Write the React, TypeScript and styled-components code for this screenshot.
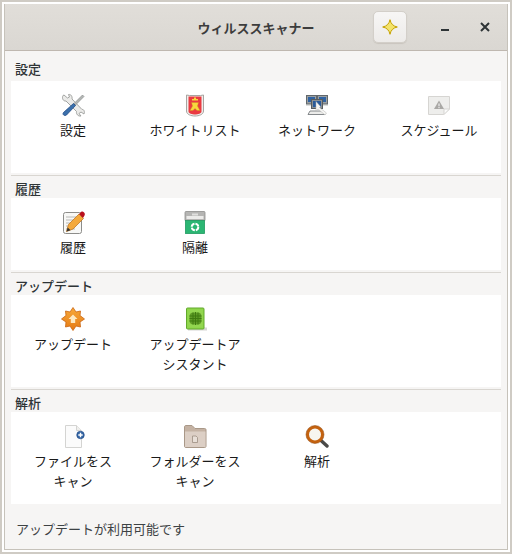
import React from 'react';
import styled, { createGlobalStyle } from 'styled-components';

const GlobalStyle = createGlobalStyle`
  html, body {
    margin: 0;
    padding: 0;
    background: #fff;
  }
  body {
    font-family: "Noto Sans CJK JP", "Noto Sans", sans-serif;
  }
`;

const Frame = styled.div`
  width: 512px;
  height: 554px;
  box-sizing: border-box;
  border: 2px solid #cfcbc4;
  padding: 2px;
  background: #fff;
`;

const Win = styled.div`
  height: 100%;
  box-sizing: border-box;
  display: flex;
  flex-direction: column;
  background: #f6f5f4;
  border: 1px solid #c6c2ba;
  border-top: 0;
`;

const TitleBar = styled.header`
  position: relative;
  flex: none;
  height: 47px;
  box-sizing: border-box;
  display: flex;
  align-items: center;
  justify-content: center;
  background: linear-gradient(#e1ded9, #dad7d2);
  border-bottom: 1px solid #bfb8b0;
`;

const Title = styled.h1`
  margin: 0;
  font-size: 13px;
  font-weight: 700;
  color: #3d3d3d;
`;

const TitleActions = styled.div`
  position: absolute;
  top: 7px;
  right: 2px;
  display: flex;
  align-items: center;
`;

const StarButton = styled.button`
  width: 34px;
  height: 32px;
  margin-right: 18px;
  padding: 0;
  display: flex;
  align-items: center;
  justify-content: center;
  background: linear-gradient(#f7f6f5, #edebe9);
  border: 1px solid #d3cfc9;
  border-radius: 5px;
  box-shadow: 0 1px 1px #c9c5be;
`;

const WinButton = styled.span`
  width: 40px;
  height: 32px;
  display: flex;
  align-items: center;
  justify-content: center;
`;

const Body = styled.main`
  flex: 1;
  padding: 5px 6px 0;
  display: flex;
  flex-direction: column;
`;

const Section = styled.section`
  display: flex;
  flex-direction: column;

  &:first-child > h2 {
    margin-bottom: 3px;
  }
`;

const SectionTitle = styled.h2`
  margin: 0;
  height: 22px;
  box-sizing: border-box;
  padding: 5px 0 0 4px;
  font-size: 13px;
  line-height: 15px;
  font-weight: 500;
  color: #2e3436;
`;

const Panel = styled.div<{ $h: number }>`
  height: ${(p) => p.$h}px;
  box-sizing: border-box;
  padding-top: 12px;
  display: grid;
  grid-template-columns: repeat(4, 122px);
  justify-content: center;
  align-content: start;
  background: #fff;
`;

const Separator = styled.hr`
  margin: 2px 0 0;
  height: 1px;
  border: 0;
  background: #d9d6d1;
`;

const Item = styled.div`
  display: flex;
  flex-direction: column;
  align-items: center;
`;

const IconBox = styled.div`
  width: 24px;
  height: 24px;
  margin-bottom: 3px;
`;

const Label = styled.span`
  width: 94px;
  text-align: center;
  font-size: 13px;
  line-height: 20px;
  line-break: strict;
  color: #1a1a1a;
`;

const StatusBar = styled.footer`
  margin-top: 15px;
  padding-left: 5px;
  font-size: 13px;
  line-height: 20px;
  color: #3d4244;
`;

const Tools = () => (
  <svg width="24" height="24" viewBox="0 0 24 24">
    <path d="M3 2 L6.5 5 L8.5 4 L7.5 1.5 C10 1 11.5 3.5 11 6 L21 16.5 C23 16 24 19 23 21 L20 19 L18 20.5 L20 23 C17 23.5 15 21 15.5 18.5 L5 8 C2.5 8.5 .5 5.5 2 2.5 Z" fill="#ebebe9" stroke="#9a9c9a" strokeWidth=".9" />
    <path d="M21.5 2 L23 3.5 L14 12.5 L12.5 11 Z" fill="#b4b8b5" stroke="#7d7f81" strokeWidth=".6" />
    <path d="M12.5 10.5 L14.5 12.5 L5.5 22 C3.5 23.5 1 21.5 2.5 19.5 Z" fill="#3b70ab" stroke="#204a87" strokeWidth=".8" />
  </svg>
);

const Shield = () => (
  <svg width="24" height="24" viewBox="0 0 24 24">
    <path d="M3.5 2 L6.5 2.5 H17.5 L20.5 2 V18 C20.5 21.5 16 23 12 23 C8 23 3.5 21.5 3.5 18 Z" fill="#efeeec" stroke="#a8a4a0" />
    <path d="M5.5 3.5 H18.5 V18.5 C18.5 20.5 15 21.5 12 21.5 C9 21.5 5.5 20.5 5.5 18.5 Z" fill="#ea3a41" />
    <path d="M11 4.5 H13 V6 H15 V7.5 H9 V6 H11 Z" fill="#f6d83e" />
    <path d="M8.5 9.5 H15.5 L14.5 13 L17 17.5 H14 L12 15.5 L10 17.5 H7 L9.5 13 Z" fill="#f6d83e" stroke="#c98a1a" strokeWidth=".4" />
  </svg>
);

const Network = () => (
  <svg width="24" height="24" viewBox="0 0 24 24">
    <rect x="1.5" y="2.5" width="10" height="8.5" fill="#9aa0a3" stroke="#62676a" />
    <rect x="12.5" y="2.5" width="10" height="8.5" fill="#9aa0a3" stroke="#62676a" />
    <rect x="3" y="4" width="7" height="5" fill="#2f62a2" />
    <rect x="14" y="4" width="7" height="5" fill="#2f62a2" />
    <rect x="1" y="11" width="22" height="1.4" fill="#a9adad" />
    <rect x="6.5" y="6.5" width="11" height="9" fill="#8a9094" stroke="#575c5f" />
    <rect x="8" y="8" width="8" height="6" fill="#2a5b9a" />
    <path d="M5 18 H18 L20 21.5 H3 Z" fill="#ececea" stroke="#6a6e72" strokeWidth=".8" />
    <path d="M11 8.5 L15.5 13.5 L14.5 14.5 L21.5 20 L20 22 L13 16 L11 18 Z" fill="#f6f6f4" stroke="#b0b0ae" strokeWidth=".5" />
  </svg>
);

const Note = () => (
  <svg width="24" height="24" viewBox="0 0 24 24">
    <path d="M1.5 3.5 H22.5 V16 L16.5 21.5 H1.5 Z" fill="#eeeeec" stroke="#d6d5d2" />
    <path d="M22.5 16 H17 V21.5 Z" fill="#fbfbfb" stroke="#d6d5d2" />
    <path d="M12 7.5 L17 16 H7 Z" fill="#a9a8a5" />
    <rect x="11.4" y="10.5" width="1.2" height="2.8" fill="#eee" />
    <rect x="11.4" y="14" width="1.2" height="1.2" fill="#eee" />
  </svg>
);

const Pencil = () => (
  <svg width="24" height="24" viewBox="0 0 24 24">
    <rect x="2.5" y="2.5" width="18" height="21" rx="2" fill="#f8f8f6" stroke="#8d8d8a" />
    <path d="M5 7 H15 M5 10 H13 M5 13 H11 M5 16 H8 M5 19 H14" stroke="#b8b8b6" strokeWidth="1" />
    <path d="M5.5 21.5 L7.5 14.5 L18 4 L22.5 8.5 L12 19 Z" fill="#f4a93c" stroke="#b96f18" strokeWidth=".7" />
    <path d="M5.5 21.5 L6.7 17.5 L9.5 20.3 Z" fill="#333" />
    <path d="M18 4 L20 2 C21 1.2 22 1.4 22.8 2.2 L23.5 3 C24 4 24 5 23.2 6 L22 8 Z" fill="#b90f1c" />
  </svg>
);

const Quarantine = () => (
  <svg width="24" height="24" viewBox="0 0 24 24">
    <rect x="2" y="1.5" width="20" height="9.5" rx="1" fill="#b5b5b3" stroke="#8d8d8b" strokeWidth=".8" />
    <rect x="3.5" y="6" width="17" height="3" fill="#ebebe9" />
    <rect x="9" y="3.5" width="6" height="2" fill="#e0e0de" />
    <rect x="2.5" y="10.5" width="19" height="13" fill="#2bb673" stroke="#209a60" strokeWidth=".8" />
    <circle cx="12" cy="17" r="3.3" fill="none" stroke="#fff" strokeWidth="2" strokeDasharray="4.2 1" />
  </svg>
);

const UpdateBadge = () => (
  <svg width="24" height="24" viewBox="0 0 24 24">
    <defs>
      <linearGradient id="updateFill" x1="0" y1="0" x2="0" y2="1">
        <stop offset="0" stopColor="#f7a93a" />
        <stop offset="1" stopColor="#e57a14" />
      </linearGradient>
    </defs>
    <path d="M12 .5 L15 5 L19.5 4 L19 8.5 L23.5 12 L19 15 L19.5 20 L15 19 L12 23.5 L9 19 L4.5 20 L5 15 L.5 12 L5 8.5 L4.5 4 L9 5 Z" fill="url(#updateFill)" stroke="#c9630f" strokeWidth=".8" />
    <path d="M12 7.5 L16.5 12 H14.2 V16 H9.8 V12 H7.5 Z" fill="#fde9c2" />
  </svg>
);

const GreenBook = () => (
  <svg width="24" height="24" viewBox="0 0 24 24">
    <rect x="5" y="20.5" width="19" height="3" fill="#d6d6d4" />
    <rect x="3.5" y="1" width="17.5" height="21" rx="1" fill="#8ed64a" stroke="#62a92c" />
    <rect x="5.5" y="3" width="14" height="17" fill="#93d650" />
    <rect x="6.5" y="5.5" width="12" height="12" rx="4" fill="#5f9c26" />
    <path d="M10 5.5 V17.5 M12.5 5 V18 M15 5.5 V17.5 M6.5 9 H18.500 M6.5 11.5 H18.500 M6.5 14 H18.500" stroke="#3f7a10" strokeWidth="1" />
  </svg>
);

const FilePlus = () => (
  <svg width="24" height="24" viewBox="0 0 24 24">
    <path d="M4.5 1.5 H15.5 L20.5 6.5 V23.5 H4.5 Z" fill="#fbfbfb" stroke="#d4d4d2" />
    <path d="M15.5 1.5 V6.5 H20.5" fill="#efefed" stroke="#d4d4d2" />
    <circle cx="19.5" cy="11" r="3.8" fill="#3465a4" stroke="#204a87" strokeWidth=".6" />
    <path d="M17.3 11 H21.7 M19.5 8.8 V13.2" stroke="#fff" strokeWidth="1.4" />
  </svg>
);

const Folder = () => (
  <svg width="24" height="24" viewBox="0 0 24 24">
    <path d="M1.5 3 C1.5 2 2 1.5 3 1.5 H9 L12 4.5 H21.5 C22.5 4.5 23 5 23 6 V22 C23 23 22.5 23.5 21.5 23.5 H2.5 C2 23.5 1.5 23 1.5 22 Z" fill="#c4b2a3" stroke="#a99888" />
    <rect x="2" y="7.5" width="20.5" height="15.5" fill="#dccfc5" />
    <path d="M9.5 12 H13 L14.5 13.5 V18.5 H9.5 Z" fill="#e8dfd7" stroke="#9c8e81" strokeWidth=".8" />
  </svg>
);

const Magnifier = () => (
  <svg width="24" height="24" viewBox="0 0 24 24">
    <path d="M16 16.5 L22 22" stroke="#4a4a48" strokeWidth="3.4" strokeLinecap="round" />
    <circle cx="10" cy="10.5" r="7.5" fill="#f7f5ef" stroke="#c4620f" strokeWidth="3" />
    <circle cx="10" cy="10.5" r="9" fill="none" stroke="#8f4408" strokeWidth=".5" />
  </svg>
);

type Entry = { label: string; icon: React.ReactNode };
type Group = { title: string; height: number; items: Entry[] };

const groups: Group[] = [
  {
    title: '設定',
    height: 92,
    items: [
      { label: '設定', icon: <Tools /> },
      { label: 'ホワイトリスト', icon: <Shield /> },
      { label: 'ネットワーク', icon: <Network /> },
      { label: 'スケジュール', icon: <Note /> },
    ],
  },
  {
    title: '履歴',
    height: 72,
    items: [
      { label: '履歴', icon: <Pencil /> },
      { label: '隔離', icon: <Quarantine /> },
    ],
  },
  {
    title: 'アップデート',
    height: 92,
    items: [
      { label: 'アップデート', icon: <UpdateBadge /> },
      { label: 'アップデートアシスタント', icon: <GreenBook /> },
    ],
  },
  {
    title: '解析',
    height: 92,
    items: [
      { label: 'ファイルをスキャン', icon: <FilePlus /> },
      { label: 'フォルダーをスキャン', icon: <Folder /> },
      { label: '解析', icon: <Magnifier /> },
    ],
  },
];

const App = () => (
  <>
    <GlobalStyle />
    <Frame lang="ja">
      <Win>
        <TitleBar>
          <Title>ウィルススキャナー</Title>
          <TitleActions>
            <StarButton aria-label="お気に入り">
              <svg width="16" height="16" viewBox="0 0 16 16">
                <path d="M8 .7 Q9.2 6.8 15.3 8 Q9.2 9.2 8 15.3 Q6.8 9.2 .7 8 Q6.8 6.8 8 .7 Z" fill="#f3e36b" stroke="#c4a000" strokeWidth="1" />
              </svg>
            </StarButton>
            <WinButton>
              <svg width="10" height="10" viewBox="0 0 10 10">
                <rect x="1" y="7" width="8" height="2" fill="#2e3436" />
              </svg>
            </WinButton>
            <WinButton>
              <svg width="10" height="10" viewBox="0 0 10 10">
                <path d="M1 1 L9 9 M9 1 L1 9" stroke="#2e3436" strokeWidth="2" />
              </svg>
            </WinButton>
          </TitleActions>
        </TitleBar>
        <Body>
          {groups.map((g, i) => (
            <Section key={g.title}>
              <SectionTitle>{g.title}</SectionTitle>
              <Panel $h={g.height}>
                {g.items.map((it) => (
                  <Item key={it.label}>
                    <IconBox>{it.icon}</IconBox>
                    <Label>{it.label}</Label>
                  </Item>
                ))}
              </Panel>
              {i < groups.length - 1 && <Separator />}
            </Section>
          ))}
          <StatusBar>アップデートが利用可能です</StatusBar>
        </Body>
      </Win>
    </Frame>
  </>
);

export default App;
